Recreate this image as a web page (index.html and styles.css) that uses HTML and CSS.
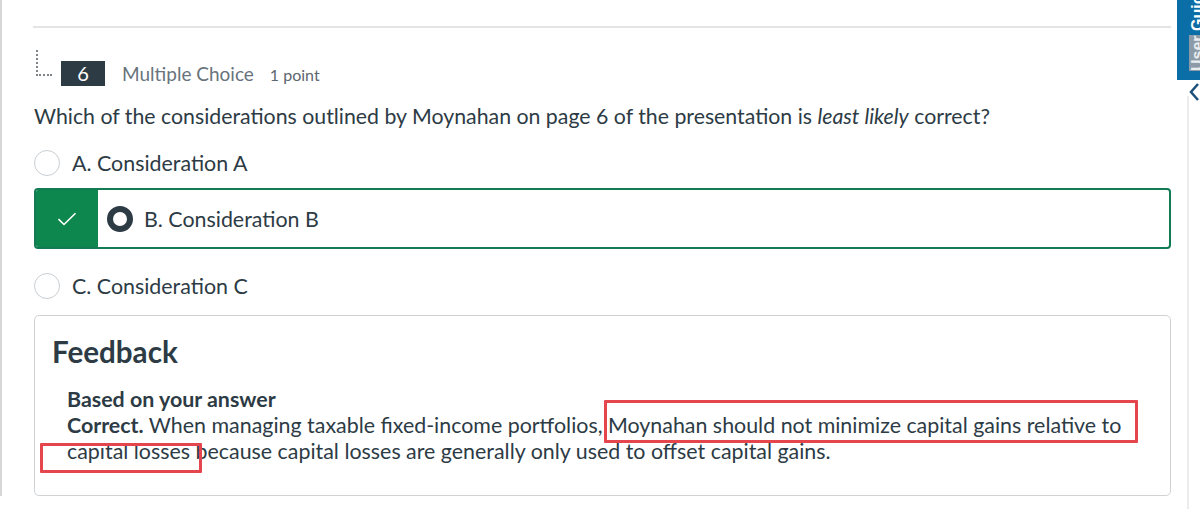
FILE: index.html
```html
<!DOCTYPE html>
<html lang="en">
<head>
<meta charset="utf-8">
<title>Quiz question 6</title>
<link rel="stylesheet" href="styles.css">
</head>
<body>
<div class="page">
  <div class="main">
    <div class="rule"></div>
    <div class="q-header">
      <span class="tree-icon"></span>
      <span class="badge">6</span>
      <span class="q-type">Multiple Choice</span>
      <span class="q-points">1 point</span>
    </div>
    <p class="q-text">Which of the considerations outlined by Moynahan on page 6 of the presentation is <em>least likely</em> correct?</p>
    <div class="option">
      <span class="radio"></span>
      <span class="opt-label">A. Consideration A</span>
    </div>
    <div class="option option-correct">
      <span class="correct-mark">
        <svg width="20" height="14" viewBox="0 0 20 14"><path d="M1.5 7.2 L7 12.5 L18.5 1.2" fill="none" stroke="#ffffff" stroke-width="1.6"/></svg>
      </span>
      <span class="radio radio-selected"></span>
      <span class="opt-label">B. Consideration B</span>
    </div>
    <div class="option option-c">
      <span class="radio"></span>
      <span class="opt-label">C. Consideration C</span>
    </div>
    <div class="feedback">
      <h2 class="fb-title">Feedback</h2>
      <div class="fb-body">
        <strong>Based on your answer</strong><br>
        <strong>Correct.</strong> When managing taxable fixed-income portfolios, Moynahan should not minimize capital gains relative to capital losses because capital losses are generally only used to offset capital gains.
      </div>
    </div>
  </div>
  <div class="side-line"></div>
</div>

<div class="guide-tab"><span class="guide-user">User</span> Guide</div>
<svg class="guide-chevron" width="12" height="20" viewBox="0 0 12 20"><path d="M10 2 L3 10 L10 18" fill="none" stroke="#1d4f7a" stroke-width="2.5"/></svg>

<div class="mark mark-1"></div>
<div class="mark mark-2"></div>
</body>
</html>
```

FILE: styles.css
```css
* { box-sizing: border-box; }

html, body {
  margin: 0;
  padding: 0;
  background: #ffffff;
}

body {
  font-family: Lato, "Open Sans", "Liberation Sans", sans-serif;
  color: #2d3b45;
  width: 1200px;
  height: 509px;
  overflow: hidden;
  position: relative;
}

.page {
  display: flex;
  height: 496px;
  border-left: 2px solid #d4d6d8;
}

.main {
  width: 1137px;
  margin-left: 32px;
  display: flex;
  flex-direction: column;
}

.main > * {
  flex: none;
}

.side-line {
  margin-left: 16px;
  margin-top: 96px;
  width: 2px;
  height: 413px;
  background: #ececec;
}

.rule {
  margin-top: 26px;
  margin-left: -1px;
  height: 2px;
  background: #e2e4e6;
}

.q-header {
  display: flex;
  align-items: flex-end;
  margin-top: 22px;
  height: 36px;
}

.tree-icon {
  width: 16px;
  height: 26px;
  margin-left: 2px;
  margin-bottom: 10px;
  border-left: 2px dotted #7d848a;
  border-bottom: 2px dotted #7d848a;
}

.badge {
  margin-left: 9px;
  width: 44px;
  height: 25px;
  background: #2d3b45;
  color: #ffffff;
  font-size: 20px;
  line-height: 25px;
  text-align: center;
}

.q-type {
  margin-left: 17px;
  font-size: 19px;
  line-height: 25px;
  color: #68737b;
}

.q-points {
  margin-left: 16px;
  font-size: 16px;
  line-height: 23px;
  color: #5b666e;
}

.q-text {
  margin: 17px 0 0 0;
  font-size: 21.3px;
  line-height: 26px;
}

.q-text em {
  font-style: italic;
}

.option {
  display: flex;
  align-items: center;
  margin-top: 21px;
  height: 26px;
  font-size: 21.4px;
  line-height: 26px;
}

.radio {
  width: 26px;
  height: 26px;
  border-radius: 50%;
  border: 1px solid #c9ced2;
  background: #ffffff;
  flex: none;
}

.opt-label {
  margin-left: 12px;
}

.option-correct {
  margin-top: 12px;
  height: 61px;
  border: 2px solid #127b53;
  border-radius: 4px;
  overflow: hidden;
}

.option-correct .correct-mark {
  width: 62px;
  height: 100%;
  background: #0e874f;
  display: flex;
  align-items: center;
  justify-content: center;
  flex: none;
}

.option-correct .radio {
  margin-left: 9px;
}

.radio-selected {
  border: 6px solid #2d3b45;
}

.option-correct .opt-label {
  margin-left: 11px;
}

.option-c {
  margin-top: 24px;
}

.feedback {
  margin-top: 16px;
  height: 181px;
  border: 1px solid #cfd3d6;
  border-radius: 5px;
  padding: 18px 10px 0 17px;
}

.fb-title {
  margin: 0;
  font-size: 29.6px;
  line-height: 36px;
  font-weight: 700;
}

.fb-body {
  margin: 16px 0 0 15px;
  font-size: 21.4px;
  line-height: 26px;
}

.fb-body strong {
  font-weight: 700;
}

.guide-tab {
  position: absolute;
  left: 1177px;
  top: 0;
  width: 23px;
  height: 80px;
  background: #0b6ea6;
  color: #ffffff;
  font-family: "Liberation Sans", Arial, sans-serif;
  font-size: 16px;
  font-weight: 700;
  writing-mode: vertical-rl;
  transform: rotate(180deg);
  padding-top: 9px;
  padding-right: 12px;
  line-height: 17px;
  white-space: nowrap;
  overflow: hidden;
}

.guide-user {
  background: #8c9ba7;
  color: #e9edf0;
}

.guide-chevron {
  position: absolute;
  left: 1188px;
  top: 82px;
}

.mark {
  position: absolute;
  border: 3px solid #e5454d;
  border-radius: 1px;
}

.mark-1 {
  left: 604px;
  top: 400px;
  width: 534px;
  height: 43px;
}

.mark-2 {
  left: 40px;
  top: 443px;
  width: 162px;
  height: 30px;
}
```
